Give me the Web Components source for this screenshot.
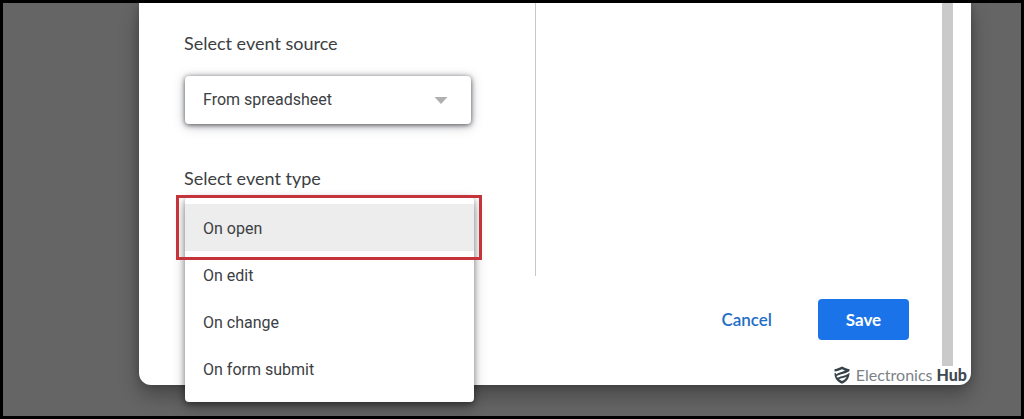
<!DOCTYPE html>
<html lang="en">
<head>
<meta charset="utf-8">
<meta name="viewport" content="width=device-width, initial-scale=1">
<title>Add trigger</title>
<style>
  body { margin: 0; font: 16px/24px Roboto, sans-serif; color: #3c4043; }
</style>
</head>
<body>
<page-backdrop>
  <trigger-dialog>
    <event-field slot="fields" label="Select event source">
      <select-box label="Select event source" value="From spreadsheet"></select-box>
    </event-field>
    <event-field slot="fields" label="Select event type">
      <option-menu label="Select event type">
        <menu-option active>On open</menu-option>
        <menu-option>On edit</menu-option>
        <menu-option>On change</menu-option>
        <menu-option>On form submit</menu-option>
      </option-menu>
    </event-field>
    <action-button slot="actions">Cancel</action-button>
    <action-button slot="actions" primary>Save</action-button>
    <brand-mark slot="brand"></brand-mark>
  </trigger-dialog>
</page-backdrop>

<script>
  const define = (name, html, setup) => {
    const template = document.createElement('template');
    template.innerHTML = html;
    customElements.define(name, class extends HTMLElement {
      constructor() {
        super();
        this.attachShadow({ mode: 'open' }).append(template.content.cloneNode(true));
      }
      connectedCallback() { if (setup) setup(this, this.shadowRoot); }
    });
  };

  define('page-backdrop', `
    <style>
      :host { display: block; box-sizing: border-box; min-height: 100vh; overflow: hidden;
        border: 3px solid #000; background: #656565; padding: 0 50px 31px 136px; }
    </style>
    <slot></slot>`);

  define('trigger-dialog', `
    <style>
      :host { display: block; background: #fff; border-radius: 0 0 12px 12px;
        box-shadow: 0 10px 20px rgba(0,0,0,.3), 0 0 8px rgba(0,0,0,.2); }
      .view { display: flex; }
      main { flex: 1; padding-bottom: 26px; }
      .panels { display: grid; grid-template-columns: 397px 1fr; min-height: 273px; }
      .fields { box-sizing: border-box; display: flex; flex-direction: column; gap: 42px;
        padding: 28px 64px 0 45px; border-right: 1px solid #c8c8c8; }
      .actions { display: flex; justify-content: flex-end; gap: 20px; padding: 23px 33px 0 0; }
      .track { width: 11px; margin-right: 18px; background: #cacaca; }
      footer { display: flex; justify-content: flex-end; height: 19px; padding-right: 4px; }
    </style>
    <div class="view">
      <main>
        <div class="panels"><div class="fields"><slot name="fields"></slot></div></div>
        <div class="actions"><slot name="actions"></slot></div>
      </main>
      <div class="track"></div>
    </div>
    <footer><slot name="brand"></slot></footer>`);

  define('event-field', `
    <style>
      :host { display: block; position: relative; }
      .label { font: 18px/24px Lato, sans-serif; color: #3c4043; }
      .control { margin: 21px 0 0 1px; }
    </style>
    <div class="label"></div>
    <div class="control"><slot></slot></div>`,
    (host, root) => { root.querySelector('.label').textContent = host.getAttribute('label'); });

  define('select-box', `
    <style>
      :host { display: flex; align-items: center; position: relative; }
      select { appearance: none; width: 100%; height: 48px; margin: 0; padding: 0 48px 0 18px;
        border: 0; border-radius: 4px; background: #fff; color: #3c4043; font: inherit;
        box-shadow: 0 1px 5px rgba(32,33,36,.7), 0 2px 12px rgba(60,64,80,.35); }
      svg { position: absolute; right: 23px; pointer-events: none; }
    </style>
    <select><option></option></select>
    <svg width="14" height="7" viewBox="0 0 14 7" aria-hidden="true"><path d="M0.5 0h13L7 7z" fill="#b0b0b0"/></svg>`,
    (host, root) => {
      root.querySelector('select').setAttribute('aria-label', host.getAttribute('label'));
      root.querySelector('option').textContent = host.getAttribute('value');
    });

  define('option-menu', `
    <style>
      :host { display: block; position: absolute; top: 31px; left: 1px; right: -3px; z-index: 1; }
      .list { padding: 7px 0 10px; border-radius: 4px; background: #fff;
        box-shadow: 0 2px 6px rgba(0,0,0,.4), 0 6px 14px rgba(0,0,0,.25); }
    </style>
    <div class="list" role="listbox"><slot></slot></div>`,
    (host, root) => { root.querySelector('.list').setAttribute('aria-label', host.getAttribute('label')); });

  define('menu-option', `
    <style>
      :host { display: block; position: relative; }
      button { display: block; width: 100%; height: 47px; margin: 0; padding: 2px 18px 0; border: 0;
        background: none; color: #3c4043; font: inherit; text-align: left; }
      :host([active]) button { background: #ededed; }
      :host([active])::after { content: ""; position: absolute; inset: -9px -8px -9px -9px;
        border: 3px solid #c5343b; pointer-events: none; }
    </style>
    <button type="button" role="option"><slot></slot></button>`);

  define('action-button', `
    <style>
      :host { display: block; }
      button { height: 41px; margin: 0; padding: 0 26px; border: 0; border-radius: 4px;
        background: none; color: #1f6fc4; font: 600 17px/24px Lato, sans-serif; }
      :host([primary]) button { min-width: 91px; background: #1a73e8; color: #fff; font-weight: 700; }
    </style>
    <button type="button"><slot></slot></button>`);

  define('brand-mark', `
    <style>
      :host { display: flex; align-items: center; gap: 6px; height: 18px;
        font: 16px/18px Lato, sans-serif; color: #7b8288; }
      b { color: #3f4a52; font-weight: 900; }
    </style>
    <svg width="16" height="18" viewBox="0 0 16 18" aria-hidden="true" fill="#36424a">
      <path d="M0.500 3.300C3.500 2.700 6 1.700 8 0.500c2 1.200 4.500 2.200 7.500 2.800v1.500C13.500 7.500 8 7.600 2.200 10.200L1.800 8.500C4.500 6.400 8.500 6 11 4.500L8 3.300C5.500 4.600 3 5.300 0.500 5.600z"/>
      <path d="M0.500 7h1.300C2 11 4.400 13.300 8 15c2.200-1 3.800-2.300 4.800-4.200C10 12 7 12 4.800 13.200L3.600 11.800C7 9.800 12.500 10 15.500 6.500 15.500 12.500 12.500 15.800 8 17.800 3.500 15.800 0.300 12.500 0.500 7z"/>
    </svg>
    <span>Electronics <b>Hub</b></span>`);
</script>
</body>
</html>
